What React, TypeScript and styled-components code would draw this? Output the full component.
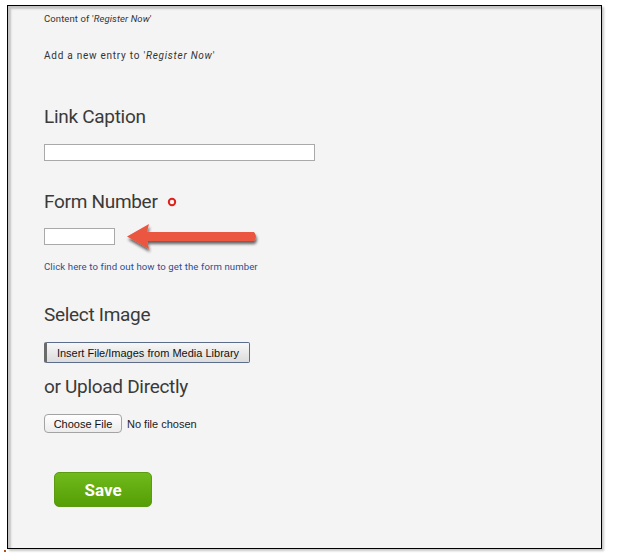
import React from "react";
import styled, { createGlobalStyle } from "styled-components";

const Global = createGlobalStyle`
  html, body { margin: 0; padding: 0; background: #ffffff; }
  body { font-family: Roboto, "Liberation Sans", sans-serif; }
`;

const Page = styled.div`
  width: 618px;
  height: 554px;
  padding: 5px 0 0 7px;
  box-sizing: border-box;
  position: relative;
`;

const Frame = styled.div`
  width: 595px;
  height: 544px;
  box-sizing: border-box;
  border: 1px solid #000;
  background: #f4f4f4;
  box-shadow: inset 3px 3px 2px #c4c4c4, 2px 2px 2px #c8c8c8;
  padding: 0 0 0 36px;
  color: #333;
`;

const Small = styled.div<{ $spaced?: boolean }>`
  font-size: ${(p) => (p.$spaced ? "10px" : "9.5px")};
  letter-spacing: ${(p) => (p.$spaced ? "0.75px" : "0.1px")};
  line-height: 12px;
  color: #333;
  margin-top: ${(p) => (p.$spaced ? "25px" : "7px")};
  em { font-style: italic; }
`;

const Heading = styled.h2<{ $top: number }>`
  font-family: Roboto, "Liberation Sans", sans-serif;
  font-weight: 400;
  font-size: 19px;
  letter-spacing: -0.3px;
  line-height: 22px;
  color: #3a3a3a;
  margin: ${(p) => p.$top}px 0 0 0;
  display: flex;
  align-items: center;
  gap: 9px;
`;

const TextInput = styled.input<{ $w: number }>`
  display: block;
  width: ${(p) => p.$w}px;
  height: 17px;
  box-sizing: border-box;
  border: 1px solid #a9a9a9;
  background: #fff;
  margin: 0;
  padding: 0;
  outline: none;
  flex: none;
`;

const Field = styled.div<{ $top: number }>`
  margin-top: ${(p) => p.$top}px;
  height: 17px;
  display: flex;
  align-items: flex-start;
`;

const ArrowBox = styled.svg`
  margin: -5px 0 0 10px;
  display: block;
  flex: none;
  overflow: visible;
`;

const HelpLink = styled.a`
  display: block;
  margin-top: 16px;
  font-size: 9.6px;
  letter-spacing: 0.1px;
  line-height: 12px;
  color: #2e4e8c;
  text-decoration: none;
`;

const MediaButton = styled.button`
  display: block;
  margin-top: 16px;
  width: 206px;
  height: 21px;
  box-sizing: border-box;
  border: 1px solid #5c6d8c;
  border-left: 3px solid #6b6b6b;
  border-radius: 2px;
  background: linear-gradient(#f7f7f7, #dcdcdc);
  font-family: "Liberation Sans", Arial, sans-serif;
  font-size: 11px;
  color: #111;
  padding: 0;
`;

const UploadRow = styled.div`
  margin-top: 16px;
  display: flex;
  align-items: center;
  gap: 5px;
  font-family: "Liberation Sans", Arial, sans-serif;
  font-size: 11px;
  color: #222;
`;

const ChooseButton = styled.button`
  width: 78px;
  height: 19px;
  box-sizing: border-box;
  border: 1px solid #a3a3a3;
  border-radius: 4px;
  background: linear-gradient(#ffffff, #ececec);
  font-family: "Liberation Sans", Arial, sans-serif;
  font-size: 11px;
  color: #111;
  padding: 0;
`;

const SaveButton = styled.button`
  display: block;
  margin: 39px 0 0 10px;
  width: 98px;
  height: 35px;
  border: 1px solid #5c9a12;
  border-radius: 5px;
  background: linear-gradient(#6fba1c, #559e05);
  color: #fff;
  font-family: Roboto, "Liberation Sans", sans-serif;
  font-weight: 700;
  font-size: 17px;
  padding: 0;
`;

const Dot = styled.span`
  position: absolute;
  left: 4px;
  top: 550px;
  width: 2px;
  height: 2px;
  background: #b05020;
`;

const Required = () => (
  <svg width="10" height="10" viewBox="0 0 10 10">
    <circle cx="5" cy="5" r="3.2" fill="none" stroke="#e0201a" strokeWidth="2" />
  </svg>
);

const Arrow = () => (
  <ArrowBox width="140" height="34" viewBox="0 0 140 34">
    <defs>
      <filter id="sh" x="-10%" y="-30%" width="120%" height="170%">
        <feGaussianBlur in="SourceAlpha" stdDeviation="1.5" />
        <feOffset dx="1" dy="3" result="o" />
        <feComponentTransfer>
          <feFuncA type="linear" slope="0.6" />
        </feComponentTransfer>
        <feMerge>
          <feMergeNode />
          <feMergeNode in="SourceGraphic" />
        </feMerge>
      </filter>
    </defs>
    <path
      d="M2 13.5 L24 1 L22 9 L129 9 Q133 13.5 129 18 L22 18 L24 26 Z"
      fill="#ea5641"
      filter="url(#sh)"
    />
  </ArrowBox>
);

export default function App() {
  return (
    <>
      <Global />
      <Page>
        <Frame>
          <Small>
            Content of '<em>Register Now</em>'
          </Small>
          <Small $spaced>
            Add a new entry to '<em>Register Now</em>'
          </Small>
          <Heading $top={44}>Link Caption</Heading>
          <Field $top={16}>
            <TextInput $w={271} />
          </Field>
          <Heading $top={30}>
            Form Number <Required />
          </Heading>
          <Field $top={15}>
            <TextInput $w={71} />
            <Arrow />
          </Field>
          <HelpLink href="#">Click here to find out how to get the form number</HelpLink>
          <Heading $top={31}>Select Image</Heading>
          <MediaButton>Insert File/Images from Media Library</MediaButton>
          <Heading $top={13}>or Upload Directly</Heading>
          <UploadRow>
            <ChooseButton>Choose File</ChooseButton>
            <span>No file chosen</span>
          </UploadRow>
          <SaveButton>Save</SaveButton>
        </Frame>
        <Dot />
      </Page>
    </>
  );
}
